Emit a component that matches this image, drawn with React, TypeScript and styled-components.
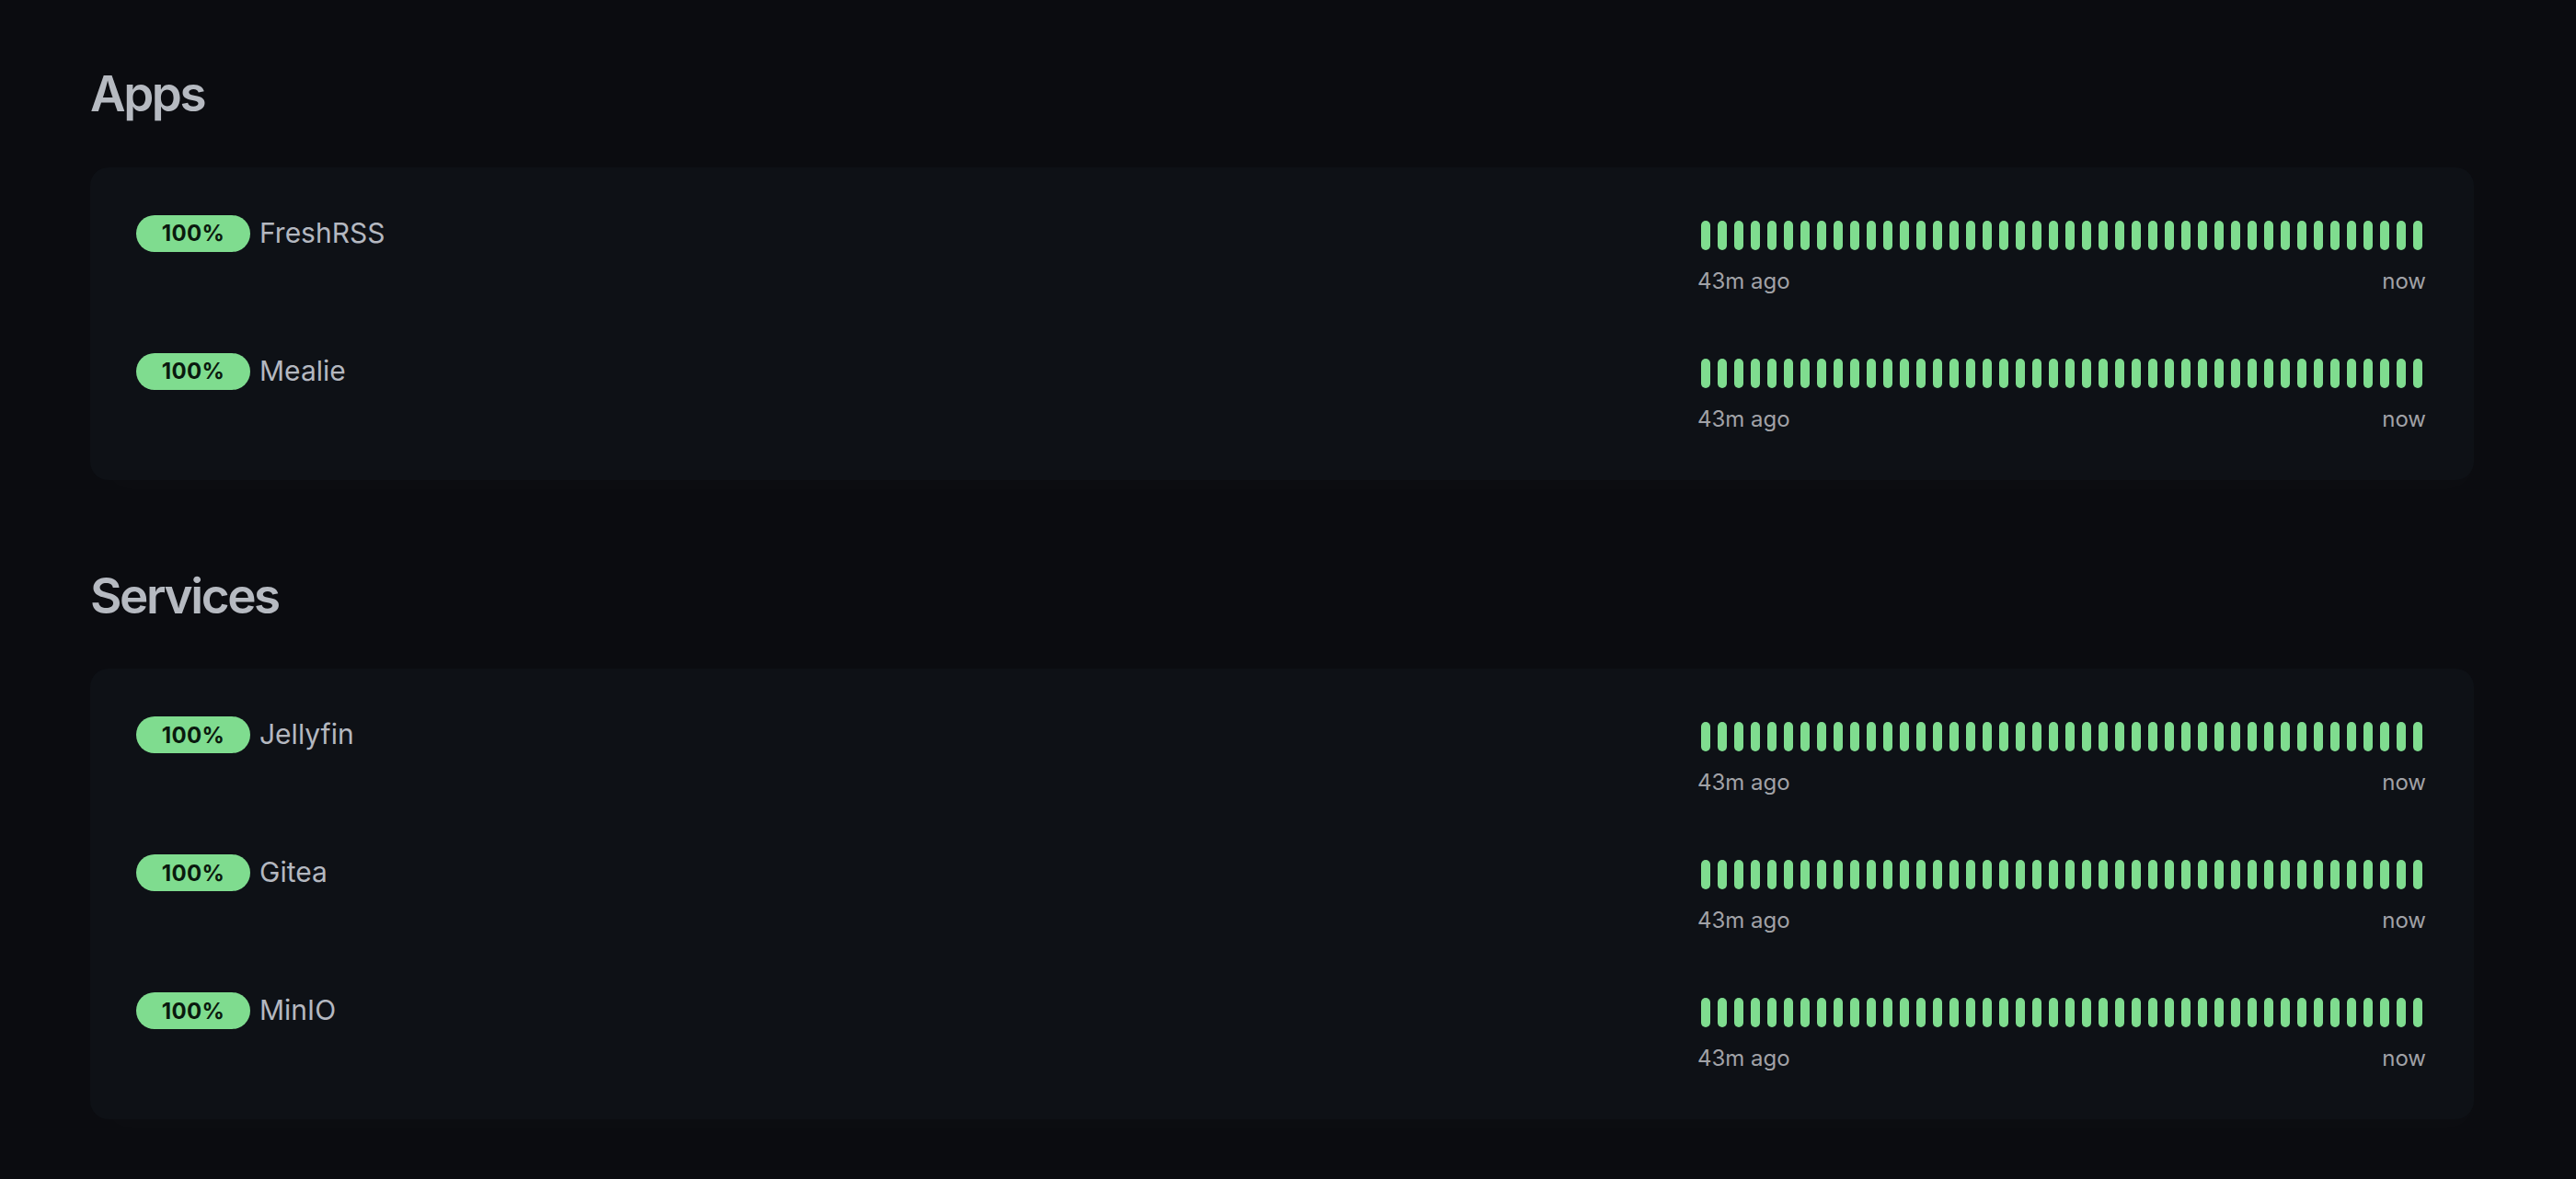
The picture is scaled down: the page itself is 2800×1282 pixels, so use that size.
import React from 'react';
import styled, { createGlobalStyle } from 'styled-components';

const COLORS = {
  PAGE: '#0b0c10',
  CARD: '#0e1116',
  HEADING: '#b6bac1',
  NAME: '#b4b8c0',
  LABEL: '#a1a2a7',
  UP: '#7fdc8f',
  BADGE_TEXT: '#0a1a0e',
};

const BAR_COUNT = 44;

type Monitor = { name: string; uptime: number };
type Section = { title: string; monitors: Monitor[] };

const sections: Section[] = [
  {
    title: 'Apps',
    monitors: [
      { name: 'FreshRSS', uptime: 100 },
      { name: 'Mealie', uptime: 100 },
    ],
  },
  {
    title: 'Services',
    monitors: [
      { name: 'Jellyfin', uptime: 100 },
      { name: 'Gitea', uptime: 100 },
      { name: 'MinIO', uptime: 100 },
    ],
  },
];

const GlobalStyle = createGlobalStyle`
  html, body {
    margin: 0;
    background: ${COLORS.PAGE};
  }
  body {
    font-family: Inter, "Noto Sans", "Liberation Sans", sans-serif;
    -webkit-font-smoothing: antialiased;
  }
`;

const Page = styled.main`
  display: flex;
  flex-direction: column;
  gap: 95px;
  padding: 71px 111px 60px 98px;
  min-height: 1282px;
  box-sizing: border-box;
`;

const Group = styled.section`
  display: flex;
  flex-direction: column;
  gap: 47px;
`;

const Title = styled.h2`
  margin: 0;
  font-size: 53px;
  line-height: 1.2;
  font-weight: 600;
  letter-spacing: -2.4px;
  color: ${COLORS.HEADING};
`;

const Card = styled.div`
  display: flex;
  flex-direction: column;
  gap: 60px;
  padding: 52px 52px 48px 50px;
  border-radius: 20px;
  background: ${COLORS.CARD};
  box-shadow: 8px 18px 36px rgba(255, 255, 255, 0.012);
`;

const Row = styled.div`
  display: flex;
  justify-content: space-between;
  align-items: flex-start;
`;

const Label = styled.div`
  display: flex;
  align-items: center;
  gap: 10px;
`;

const Badge = styled.span`
  display: inline-flex;
  align-items: center;
  justify-content: center;
  width: 124px;
  height: 40px;
  border-radius: 20px;
  background: ${COLORS.UP};
  color: ${COLORS.BADGE_TEXT};
  font-size: 24px;
  font-weight: 700;
  letter-spacing: 0.3px;
`;

const Name = styled.span`
  font-size: 30px;
  line-height: 40px;
  color: ${COLORS.NAME};
  margin-top: -2px;
`;

const History = styled.div`
  display: flex;
  flex-direction: column;
  gap: 16px;
  width: 792px;
  margin-top: 6px;
`;

const Bars = styled.div`
  display: flex;
`;

const Beat = styled.span<{ $up: boolean }>`
  flex: 0 0 18px;
  display: flex;
  justify-content: center;

  &::before {
    content: '';
    width: 10px;
    height: 32px;
    border-radius: 5px;
    background: ${(p) => (p.$up ? COLORS.UP : '#e5636b')};
  }
`;

const Axis = styled.div`
  display: flex;
  justify-content: space-between;
  font-size: 24px;
  line-height: 36px;
  color: ${COLORS.LABEL};
`;

const MonitorRow: React.FC<{ monitor: Monitor }> = ({ monitor }) => (
  <Row>
    <Label>
      <Badge>{monitor.uptime}%</Badge>
      <Name>{monitor.name}</Name>
    </Label>
    <History>
      <Bars>
        {Array.from({ length: BAR_COUNT }, (_, i) => (
          <Beat key={i} $up />
        ))}
      </Bars>
      <Axis>
        <span>43m ago</span>
        <span>now</span>
      </Axis>
    </History>
  </Row>
);

const App: React.FC = () => (
  <>
    <GlobalStyle />
    <Page>
      {sections.map((section) => (
        <Group key={section.title}>
          <Title>{section.title}</Title>
          <Card>
            {section.monitors.map((m) => (
              <MonitorRow key={m.name} monitor={m} />
            ))}
          </Card>
        </Group>
      ))}
    </Page>
  </>
);

export default App;
